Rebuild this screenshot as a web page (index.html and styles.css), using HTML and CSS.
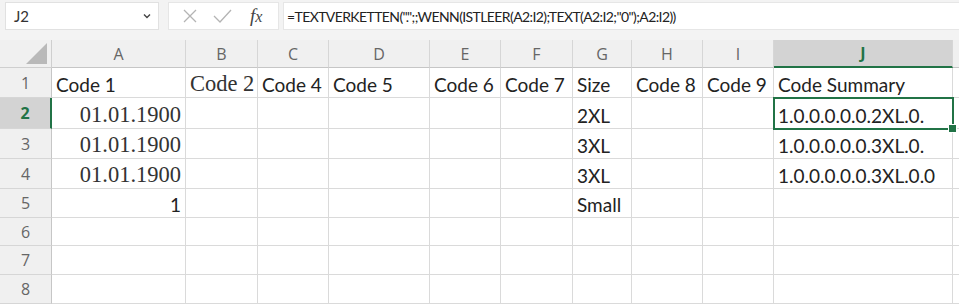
FILE: index.html
```html
<!DOCTYPE html>
<html>

<head>
    <link rel="stylesheet" href="styles.css">
</head>

<body>

    <div id="toolbar">
        <div class="namebox">
            <span>J2</span>
            <svg width="10" height="8" viewBox="0 0 10 8"><path d="M2 2.5 L5 5.5 L8 2.5" stroke="#444" stroke-width="1.4" fill="none"/></svg>
        </div>
        <div class="fxbox">
            <svg width="16" height="16" viewBox="0 0 16 16"><path d="M2 2 L14 14 M14 2 L2 14" stroke="#b4b4b4" stroke-width="1.3" fill="none"/></svg>
            <svg width="20" height="16" viewBox="0 0 20 16"><path d="M2 8 L8 14 L19 2" stroke="#b4b4b4" stroke-width="1.3" fill="none"/></svg>
            <span class="fx">f<i>x</i></span>
        </div>
        <div class="formula">=TEXTVERKETTEN(".";;WENN(ISTLEER(A2:I2);TEXT(A2:I2;"0");A2:I2))</div>
    </div>

    <div id="sheet">
        <div class="corner"><div class="tri"></div></div>
        <div class="colhead">A</div>
        <div class="colhead">B</div>
        <div class="colhead">C</div>
        <div class="colhead">D</div>
        <div class="colhead">E</div>
        <div class="colhead">F</div>
        <div class="colhead">G</div>
        <div class="colhead">H</div>
        <div class="colhead">I</div>
        <div class="colhead active">J</div>
        <div class="colhead"></div>

        <div class="rowhead">1</div>
        <div class="cell">Code 1</div>
        <div class="cell serif">Code 2</div>
        <div class="cell">Code 4</div>
        <div class="cell">Code 5</div>
        <div class="cell">Code 6</div>
        <div class="cell">Code 7</div>
        <div class="cell">Size</div>
        <div class="cell">Code 8</div>
        <div class="cell">Code 9</div>
        <div class="cell">Code Summary</div>
        <div class="cell"></div>

        <div class="rowhead active">2</div>
        <div class="cell serif num">01.01.1900</div>
        <div class="cell"></div>
        <div class="cell"></div>
        <div class="cell"></div>
        <div class="cell"></div>
        <div class="cell"></div>
        <div class="cell">2XL</div>
        <div class="cell"></div>
        <div class="cell"></div>
        <div class="cell selected">1.0.0.0.0.0.2XL.0.<span class="handle"></span></div>
        <div class="cell"></div>

        <div class="rowhead">3</div>
        <div class="cell serif num">01.01.1900</div>
        <div class="cell"></div>
        <div class="cell"></div>
        <div class="cell"></div>
        <div class="cell"></div>
        <div class="cell"></div>
        <div class="cell">3XL</div>
        <div class="cell"></div>
        <div class="cell"></div>
        <div class="cell">1.0.0.0.0.0.3XL.0.</div>
        <div class="cell"></div>

        <div class="rowhead">4</div>
        <div class="cell serif num">01.01.1900</div>
        <div class="cell"></div>
        <div class="cell"></div>
        <div class="cell"></div>
        <div class="cell"></div>
        <div class="cell"></div>
        <div class="cell">3XL</div>
        <div class="cell"></div>
        <div class="cell"></div>
        <div class="cell">1.0.0.0.0.0.3XL.0.0</div>
        <div class="cell"></div>

        <div class="rowhead">5</div>
        <div class="cell num">1</div>
        <div class="cell"></div>
        <div class="cell"></div>
        <div class="cell"></div>
        <div class="cell"></div>
        <div class="cell"></div>
        <div class="cell">Small</div>
        <div class="cell"></div>
        <div class="cell"></div>
        <div class="cell"></div>
        <div class="cell"></div>

        <div class="rowhead">6</div>
        <div class="cell"></div><div class="cell"></div><div class="cell"></div><div class="cell"></div><div class="cell"></div>
        <div class="cell"></div><div class="cell"></div><div class="cell"></div><div class="cell"></div><div class="cell"></div><div class="cell"></div>

        <div class="rowhead">7</div>
        <div class="cell"></div><div class="cell"></div><div class="cell"></div><div class="cell"></div><div class="cell"></div>
        <div class="cell"></div><div class="cell"></div><div class="cell"></div><div class="cell"></div><div class="cell"></div><div class="cell"></div>

        <div class="rowhead">8</div>
        <div class="cell"></div><div class="cell"></div><div class="cell"></div><div class="cell"></div><div class="cell"></div>
        <div class="cell"></div><div class="cell"></div><div class="cell"></div><div class="cell"></div><div class="cell"></div><div class="cell"></div>
    </div>

</body>

</html>
```

FILE: styles.css
```css
body {
    margin: 0;
    background-color: #ffffff;
    font-family: Lato, "Liberation Sans", sans-serif;
    overflow: hidden;
}

#toolbar {
    height: 40px;
    background-color: #f3f3f3;
    display: flex;
    padding: 2px 0 0 5px;
    box-sizing: border-box;
    gap: 9px;
}

.namebox {
    width: 154px;
    height: 28px;
    background-color: #ffffff;
    border: 1px solid #e1e1e1;
    box-sizing: border-box;
    display: flex;
    align-items: center;
    justify-content: space-between;
    padding: 0 6px 0 8px;
    font-size: 15px;
    color: #333333;
}

.fxbox {
    width: 111px;
    height: 28px;
    background-color: #ffffff;
    border: 1px solid #e6e6e6;
    box-sizing: border-box;
    display: flex;
    align-items: center;
    padding-left: 13px;
    gap: 14px;
}

.fx {
    font-family: "Liberation Serif", serif;
    font-style: italic;
    font-size: 19px;
    color: #444444;
    margin-left: 4px;
}

.fx i {
    font-size: 16px;
}

.formula {
    flex-grow: 1;
    height: 28px;
    background-color: #ffffff;
    border: 1px solid #e6e6e6;
    border-right: none;
    box-sizing: border-box;
    margin-left: -5px;
    padding-left: 3px;
    display: flex;
    align-items: center;
    font-size: 14px;
    color: #222222;
    letter-spacing: -0.6px;
}

#sheet {
    display: grid;
    grid-template-columns: 52px 134px 72px 71px 101px 71px 72px 59px 71px 71px 179px 40px;
    grid-template-rows: 28px 30px 31px 30px 30px 29px 28px 29px 29px;
}

.corner {
    background-color: #f0f0f0;
    border-right: 1px solid #cfcfcf;
    border-bottom: 1px solid #cfcfcf;
    position: relative;
}

.tri {
    position: absolute;
    right: 4px;
    bottom: 3px;
    width: 0;
    height: 0;
    border-left: 21px solid transparent;
    border-bottom: 21px solid #b9b9b9;
}

.colhead {
    background-color: #f0f0f0;
    border-right: 1px solid #d6d6d6;
    border-bottom: 1px solid #c6c6c6;
    display: flex;
    align-items: center;
    justify-content: center;
    font-family: "Open Sans", sans-serif;
    font-size: 16px;
    color: #666666;
}

.colhead.active {
    background-color: #d3d3d3;
    border-bottom: 2px solid #217346;
    color: #217346;
    font-weight: bold;
}

.rowhead {
    background-color: #f0f0f0;
    border-right: 1px solid #c6c6c6;
    border-bottom: 1px solid #d6d6d6;
    display: flex;
    align-items: center;
    justify-content: center;
    font-family: "Open Sans", sans-serif;
    font-size: 16px;
    color: #666666;
}

.rowhead.active {
    background-color: #d3d3d3;
    border-right: 2px solid #217346;
    color: #217346;
    font-weight: bold;
}

.cell {
    border-right: 1px solid #dadada;
    border-bottom: 1px solid #dadada;
    display: flex;
    align-items: flex-end;
    padding: 0 0 1px 4px;
    font-size: 19px;
    color: #222222;
    white-space: nowrap;
    overflow: visible;
    position: relative;
}

.cell.num {
    justify-content: flex-end;
    padding-right: 4px;
}

.cell.serif {
    font-family: "Liberation Serif", serif;
    font-size: 22.5px;
    color: #333333;
    padding-bottom: 0;
}

.cell.selected {
    outline: 2px solid #217346;
    outline-offset: -1px;
    z-index: 2;
}

.handle {
    position: absolute;
    right: -5px;
    bottom: -5px;
    width: 7px;
    height: 7px;
    background-color: #217346;
    border: 1px solid #ffffff;
}
```
